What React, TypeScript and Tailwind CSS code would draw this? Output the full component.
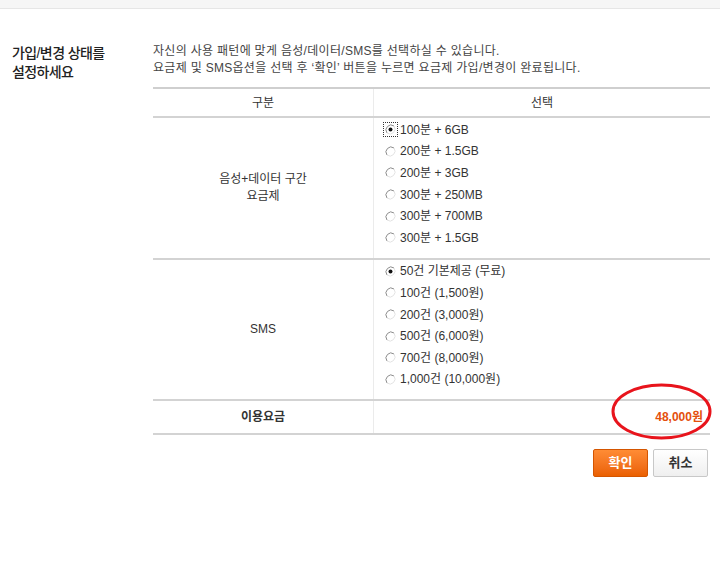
const plans = [
  "100분 + 6GB",
  "200분 + 1.5GB",
  "200분 + 3GB",
  "300분 + 250MB",
  "300분 + 700MB",
  "300분 + 1.5GB",
];

const smsOptions = [
  "50건 기본제공 (무료)",
  "100건 (1,500원)",
  "200건 (3,000원)",
  "500건 (6,000원)",
  "700건 (8,000원)",
  "1,000건 (10,000원)",
];

function Radio({ checked, focused }: { checked?: boolean; focused?: boolean }) {
  return (
    <span className="relative flex h-[11px] w-[11px] shrink-0 items-center justify-center">
      {focused && (
        <span className="absolute -inset-[2px] border border-dotted border-[#333]" />
      )}
      <svg viewBox="0 0 11 11" className="h-[11px] w-[11px]" aria-hidden="true">
        <circle cx="5.5" cy="5.5" r="5" fill="#fff" />
        <path d="M2 9 A5 5 0 0 1 9 2" fill="none" stroke="#8c8c8c" strokeWidth="1" />
        <path d="M9 2 A5 5 0 0 1 2 9" fill="none" stroke="#e2e2e2" strokeWidth="1" />
        {checked && <circle cx="5.5" cy="5.5" r="2" fill="#111" />}
      </svg>
    </span>
  );
}

function OptionList({ items, focusFirst }: { items: string[]; focusFirst?: boolean }) {
  return (
    <ul className="pl-[11px] pt-px pb-[9px]">
      {items.map((item, i) => (
        <li key={item} className="flex h-[21.6px] items-center gap-[4px]">
          <Radio checked={i === 0} focused={focusFirst && i === 0} />
          <span>{item}</span>
        </li>
      ))}
    </ul>
  );
}

export default function App() {
  return (
    <div
      className="h-[571px] w-[720px] overflow-hidden bg-white text-[12px] text-[#333]"
      style={{ fontFamily: '"Liberation Sans", "Noto Sans CJK KR", sans-serif' }}
    >
      <div className="h-[9px] border-b border-[#e6e6e6] bg-[#f6f6f6]" />

      <div className="flex pt-[34px]">
        <div className="w-[153px] pl-3 pt-[1px]">
          <h2 className="text-[14px] leading-[19px] font-medium tracking-[-0.6px] text-[#222]">
            가입/변경 상태를
            <br />
            설정하세요
          </h2>
        </div>

        <div className="w-[557px]">
          <p className="leading-[17px] tracking-[0.3px] text-[#444]">
            자신의 사용 패턴에 맞게 음성/데이터/SMS를 선택하실 수 있습니다.
            <br />
            요금제 및 SMS옵션을 선택 후 ‘확인’ 버튼을 누르면 요금제 가입/변경이 완료됩니다.
          </p>

          <div className="mt-[10px] border-t-2 border-[#cfcfcf]">
            <div className="grid grid-cols-[221px_1fr] border-b-2 border-[#d3d3d3]">
              <div className="flex h-[27px] items-center justify-center border-r border-[#ebebeb]">구분</div>
              <div className="flex h-[27px] items-center justify-center">선택</div>
            </div>

            <div className="grid grid-cols-[221px_1fr] border-b-2 border-[#d3d3d3]">
              <div className="flex items-center justify-center border-r border-[#ebebeb] text-center leading-[17px]">
                <span>
                  음성+데이터 구간
                  <br />
                  요금제
                </span>
              </div>
              <OptionList items={plans} focusFirst />
            </div>

            <div className="grid grid-cols-[221px_1fr] border-b-2 border-[#d3d3d3]">
              <div className="flex items-center justify-center border-r border-[#ebebeb]">SMS</div>
              <OptionList items={smsOptions} />
            </div>

            <div className="grid grid-cols-[221px_1fr] border-b-2 border-[#d3d3d3]">
              <div className="flex h-[32px] items-center justify-center border-r border-[#ebebeb] font-bold">
                이용요금
              </div>
              <div className="relative flex h-[32px] items-center justify-end pr-[7px] font-bold text-[#e4500c]">
                48,000원
                <svg
                  className="absolute top-[-18px] left-[237px] h-[57px] w-[101px]"
                  viewBox="0 0 101 57"
                  aria-hidden="true"
                >
                  <ellipse cx="50.5" cy="28.5" rx="48.5" ry="26.5" fill="none" stroke="#e8141c" strokeWidth="3" />
                </svg>
              </div>
            </div>
          </div>

          <div className="mt-[14px] flex justify-end gap-[5px] pr-[2px]">
            <button className="h-[28px] w-[55px] rounded-[2px] border border-[#d45500] bg-gradient-to-b from-[#ff8c34] to-[#ea6000] text-[13px] font-bold text-white">
              확인
            </button>
            <button className="h-[28px] w-[55px] rounded-[2px] border border-[#c8c8c8] bg-gradient-to-b from-white to-[#efefef] text-[13px] font-bold text-[#333]">
              취소
            </button>
          </div>
        </div>
      </div>
    </div>
  );
}
